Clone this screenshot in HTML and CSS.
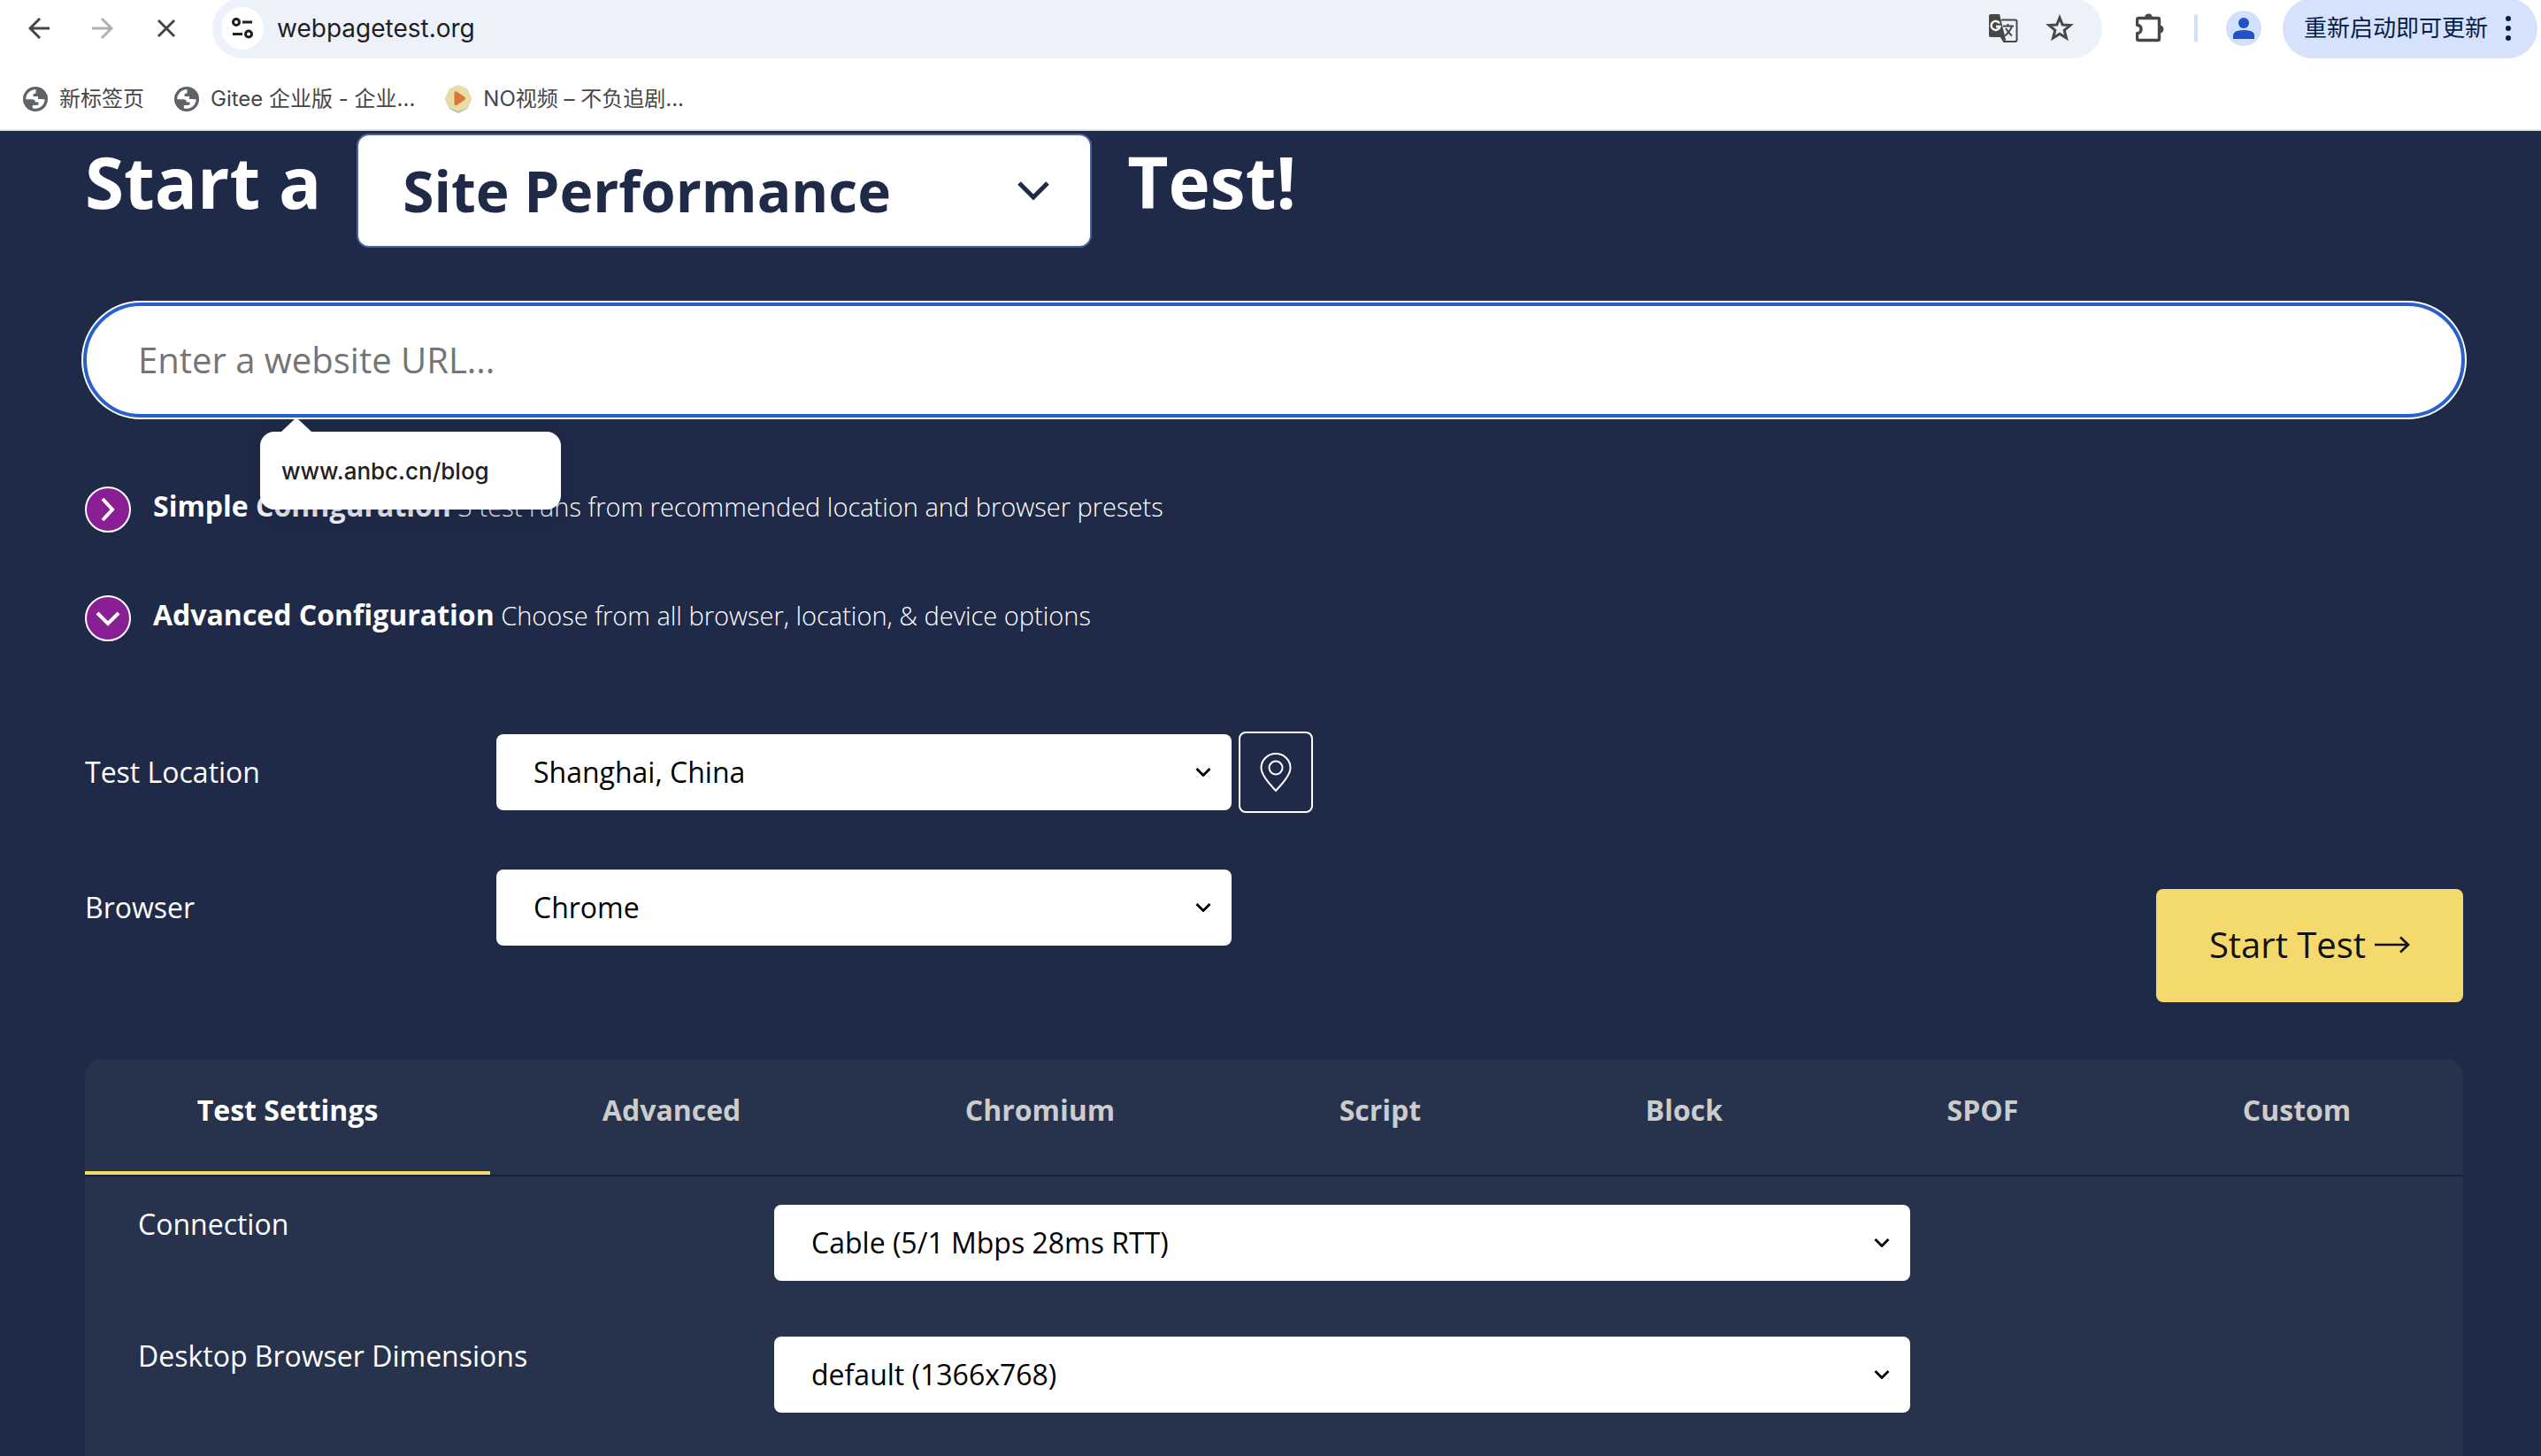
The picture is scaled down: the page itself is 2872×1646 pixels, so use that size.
FILE: index.html
```html
<!DOCTYPE html>
<html lang="en">
<head>
<meta charset="utf-8">
<title>WebPageTest</title>
<link rel="stylesheet" href="styles.css">
</head>
<body>
<svg class="sprite" aria-hidden="true">
  <symbol id="chevron" viewBox="0 0 18 10"><path d="M1.500 1L9 8.500L16.500 1" fill="none" stroke="currentColor" stroke-width="2.800"/></symbol>
  <symbol id="globe" viewBox="0 0 28 28">
    <circle cx="14" cy="14" r="14" fill="#5f6368"/>
    <path d="M14.500 3C8.200 3.200 3.400 8 3.200 14.200L10.500 14.200C12.600 14.200 14 15.600 14 17.500L17.500 17.500L17.500 20.500L14 21L10.800 21L10.800 24.200C12.500 24.900 14.500 25.100 16.500 24.500C20.500 23.500 24.300 20 24.800 14.500L20.500 14L17 14L17 11L12 11C10.500 9 12 7.500 14.500 7.500Z" fill="#fff"/>
  </symbol>
</svg>

<header class="browser">
  <div class="toolbar">
    <nav class="nav-buttons">
      <button class="icon-button" aria-label="Back"><svg width="24" height="24" viewBox="0 0 24 24"><path d="M24 12H2M13 1L2 12L13 23" fill="none" stroke="#474747" stroke-width="3"/></svg></button>
      <button class="icon-button" aria-label="Forward"><svg width="24" height="24" viewBox="0 0 24 24"><path d="M0 12H22M11 1L22 12L11 23" fill="none" stroke="#b0b0b0" stroke-width="3"/></svg></button>
      <button class="icon-button" aria-label="Stop loading"><svg width="24" height="24" viewBox="0 0 24 24"><path d="M3 3L21 21M21 3L3 21" fill="none" stroke="#474747" stroke-width="3"/></svg></button>
    </nav>
    <div class="omnibox">
      <button class="site-info" aria-label="Site information">
        <svg width="24" height="24" viewBox="0 0 24 24" fill="none" stroke="#1f1f1f" stroke-width="3"><circle cx="5" cy="5" r="3.500"/><path d="M12 5H23M1 18.500H12"/><circle cx="19" cy="18.500" r="3.500"/></svg>
      </button>
      <input class="address" type="text" aria-label="Address" value="webpagetest.org">
      <button class="icon-button" aria-label="Translate">
        <svg width="34" height="34" viewBox="0 0 34 34"><path d="M15 7.500H30.500Q32.500 7.500 32.500 9.500V30Q32.500 32 30.500 32H18L15 27" fill="none" stroke="#474747" stroke-width="2"/><path d="M3 1H13L20.500 32L14 27H3Q1 27 1 25V3Q1 1 3 1Z" fill="#474747"/><path d="M13 11.500A5 5 0 1 0 13.500 15H9" fill="none" stroke="#fff" stroke-width="2.400"/><path d="M17 14.500H29M22.500 12V14.500M27 14.500Q25 21 19 25.500M20 17Q23 22 27 25.500" fill="none" stroke="#474747" stroke-width="2"/></svg>
      </button>
      <button class="icon-button" aria-label="Bookmark this page">
        <svg width="32" height="32" viewBox="0 0 32 32"><path d="M16 4L19.200 12L28 12.600L21.200 18.200L23.500 27L16 22.200L8.500 27L10.800 18.200L4 12.600L12.800 12Z" fill="none" stroke="#474747" stroke-width="3"/></svg>
      </button>
    </div>
    <div class="toolbar-end">
      <button class="icon-button" aria-label="Extensions">
        <svg width="32" height="34" viewBox="0 0 32 34"><path d="M3.500 5.500H25Q26.500 5.500 26.500 7V29Q26.500 30.500 25 30.500H3.500Q1.500 30.500 1.500 29V23Q6 22 6 18Q6 14 1.500 13V7Q1.500 5.500 3.500 5.500Z" fill="none" stroke="#474747" stroke-width="3.400"/><path d="M10 5A4.500 4.500 0 0 1 19 5ZM27 13.500A4.500 4.500 0 0 1 27 22.500Z" fill="#474747"/></svg>
      </button>
      <span class="divider"></span>
      <button class="avatar" aria-label="Profile">
        <svg width="24" height="24" viewBox="0 0 24 24" fill="#2250c5"><circle cx="12" cy="6" r="6"/><path d="M0 24V20Q0 14 12 14Q24 14 24 20V24Z"/></svg>
      </button>
      <button class="update">重新启动即可更新
        <svg width="6" height="28" viewBox="0 0 6 28" fill="#041e49"><circle cx="3" cy="3" r="3"/><circle cx="3" cy="14" r="3"/><circle cx="3" cy="25" r="3"/></svg>
      </button>
    </div>
  </div>
  <nav class="bookmarks">
    <a class="bookmark" href="#"><svg width="28" height="28"><use href="#globe"/></svg>新标签页</a>
    <a class="bookmark" href="#"><svg width="28" height="28"><use href="#globe"/></svg>Gitee 企业版 - 企业...</a>
    <a class="bookmark" href="#"><svg width="30" height="32" viewBox="0 0 30 32"><path d="M15 2L25 6L30 16L25 27L15 32L5 27L0 16L5 6Z" fill="#bdb9a4"/><path d="M15 0L25 4L30 15L25 26L15 30L5 26L0 15L5 4Z" fill="#eadca6"/><path d="M10.500 9Q10.500 6.500 13 7.500L22 13.500Q24 15.500 22 17L13 23Q10.500 24 10.500 21.500Z" fill="#db7838"/></svg>NO视频 – 不负追剧...</a>
  </nav>
</header>

<main class="page">
  <h1 class="title">
    <label for="test-type">Start a</label>
    <span class="select select-title">
      <select id="test-type"><option>Site Performance</option></select>
      <svg width="36" height="22" viewBox="0 0 36 22"><path d="M2 2L18 18L34 2" fill="none" stroke="currentColor" stroke-width="5"/></svg>
    </span>
    <span>Test!</span>
  </h1>

  <div class="url-field">
    <input class="url" type="text" aria-label="Website URL" placeholder="Enter a website URL...">
    <div class="suggestions"><a href="#">www.anbc.cn/blog</a></div>
  </div>

  <div class="configs">
    <button class="config" aria-expanded="false">
      <span class="config-icon"><svg width="28" height="28" viewBox="0 0 28 28"><path d="M8 2L19 14L8 26" fill="none" stroke="#fff" stroke-width="4"/></svg></span>
      <span class="config-text"><strong>Simple Configuration</strong> 3 test runs from recommended location and browser presets</span>
    </button>
    <button class="config" aria-expanded="true">
      <span class="config-icon"><svg width="28" height="28" viewBox="0 0 28 28"><path d="M2 8L14 20L26 8" fill="none" stroke="#fff" stroke-width="4"/></svg></span>
      <span class="config-text"><strong>Advanced Configuration</strong> Choose from all browser, location, &amp; device options</span>
    </button>
  </div>

  <div class="start-row">
    <div class="fields">
      <div class="field">
        <label for="location">Test Location</label>
        <span class="select">
          <select id="location"><option>Shanghai, China</option></select>
          <svg width="18" height="10"><use href="#chevron"/></svg>
        </span>
        <button class="pin" aria-label="Choose location on map">
          <svg width="36" height="44" viewBox="0 0 36 44" fill="none" stroke="#fff" stroke-width="2"><path d="M18 43C14 38 1.500 27 1.500 17A16.500 16 0 0 1 34.500 17C34.500 27 22 38 18 43Z"/><circle cx="18" cy="17" r="7.500"/></svg>
        </button>
      </div>
      <div class="field">
        <label for="browser">Browser</label>
        <span class="select">
          <select id="browser"><option>Chrome</option></select>
          <svg width="18" height="10"><use href="#chevron"/></svg>
        </span>
      </div>
    </div>
    <button class="start">Start Test
      <svg width="40" height="20" viewBox="0 0 40 20"><path d="M0 10H38M29 1.500L38 10L29 18.500" fill="none" stroke="#111" stroke-width="2.600"/></svg>
    </button>
  </div>

  <section class="panel">
    <div class="tabs" role="tablist">
      <button class="tab tab-active" role="tab" aria-selected="true">Test Settings</button>
      <button class="tab" role="tab">Advanced</button>
      <button class="tab" role="tab">Chromium</button>
      <button class="tab" role="tab">Script</button>
      <button class="tab" role="tab">Block</button>
      <button class="tab" role="tab">SPOF</button>
      <button class="tab" role="tab">Custom</button>
    </div>
    <div class="settings">
      <div class="setting">
        <label for="connection">Connection</label>
        <span class="select">
          <select id="connection"><option>Cable (5/1 Mbps 28ms RTT)</option></select>
          <svg width="18" height="10"><use href="#chevron"/></svg>
        </span>
      </div>
      <div class="setting">
        <label for="dimensions">Desktop Browser Dimensions</label>
        <span class="select">
          <select id="dimensions"><option>default (1366x768)</option></select>
          <svg width="18" height="10"><use href="#chevron"/></svg>
        </span>
      </div>
    </div>
  </section>
</main>
</body>
</html>
```
FILE: styles.css
```css
* { box-sizing: border-box; }

body {
  margin: 0;
  min-height: 100vh;
  display: flex;
  flex-direction: column;
  background: #1f2a48;
  color: #fff;
  font: 32px/44px "Open Sans", "Noto Sans", sans-serif;
}

button, input, select { font: inherit; color: inherit; }
button { padding: 0; border: 0; background: none; cursor: pointer; }
a { color: inherit; text-decoration: none; }
svg { display: block; flex: none; }
.sprite { position: absolute; width: 0; height: 0; }

/* Browser chrome */
.browser {
  background: #fff;
  border-bottom: 2px solid #dfe3de;
  color: #474747;
  font: 24px/32px Inter, "Noto Sans CJK SC", sans-serif;
}
.toolbar {
  display: flex;
  height: 66px;
  padding-right: 4px;
  overflow: hidden;
  align-items: flex-end;
}
.nav-buttons {
  display: flex;
  gap: 48px;
  padding: 0 40px 0 32px;
  height: 68px;
  align-items: center;
}
.icon-button { display: flex; flex: none; }
.omnibox {
  flex: 1;
  display: flex;
  align-items: center;
  gap: 31px;
  height: 68px;
  padding: 0 32px 0 10px;
  border-radius: 34px;
  background: #edf2fa;
}
.site-info {
  display: grid;
  place-items: center;
  flex: none;
  width: 48px;
  height: 48px;
  border-radius: 50%;
  background: #fff;
}
.address {
  flex: 1;
  min-width: 0;
  margin-left: -16px;
  padding: 0;
  border: 0;
  outline: 0;
  background: none;
  color: #1f1f1f;
  font-size: 28px;
}
.toolbar-end {
  display: flex;
  align-items: center;
  height: 68px;
  padding-left: 38px;
}
.divider {
  width: 4px;
  height: 32px;
  margin: 0 32px 0 34px;
  border-radius: 2px;
  background: #d3e0fc;
}
.avatar {
  display: grid;
  place-items: center;
  width: 40px;
  height: 40px;
  margin-right: 24px;
  border-radius: 50%;
  background: #d3e0fc;
}
.update {
  display: flex;
  align-items: center;
  gap: 20px;
  height: 68px;
  padding: 0 30px 0 24px;
  border-radius: 34px;
  background: #d6e1fb;
  color: #041e49;
  font-size: 26px;
  white-space: nowrap;
}
.bookmarks {
  display: flex;
  align-items: center;
  gap: 34px;
  height: 80px;
  padding: 12px 26px 0;
}
.bookmark {
  display: flex;
  align-items: center;
  gap: 13px;
  white-space: nowrap;
}

/* Test form */
.page {
  flex: 1;
  display: flex;
  flex-direction: column;
  padding: 3px 88px 0 96px;
}
.title {
  display: flex;
  align-items: flex-start;
  gap: 40px;
  margin: 0 0 62px;
  font-size: 80px;
  line-height: 108px;
  font-weight: 700;
}
.select {
  position: relative;
  display: block;
  color: #000;
}
.select select {
  display: block;
  width: 100%;
  height: 86px;
  padding: 0 64px 0 42px;
  border: 0;
  border-radius: 8px;
  background: #fff;
  appearance: none;
}
.select svg {
  position: absolute;
  top: 50%;
  right: 23px;
  transform: translateY(-50%);
  pointer-events: none;
}
.select-title {
  flex: 0 1 831px;
  color: #1f2a48;
}
.select-title select {
  height: 129px;
  padding: 0 100px 0 50px;
  border: 2px solid #4d6298;
  border-radius: 14px;
  font-size: 64px;
}
.select-title svg { right: 48px; }

.url-field {
  position: relative;
  margin: 0 -2px;
}
.url {
  display: block;
  width: 100%;
  height: 130px;
  padding: 0 58px 2px;
  border: 4px solid #2860c8;
  border-radius: 65px;
  outline: 0;
  background: #fff;
  box-shadow: 0 0 0 2px #fff;
  color: #111;
  font-size: 40px;
}
.url::placeholder { color: #757575; opacity: 1; }
.suggestions {
  position: absolute;
  top: 146px;
  left: 200px;
  width: 340px;
  padding: 25px 24px 23px;
  border-radius: 16px;
  background: #fff;
  box-shadow: 0 6px 20px rgba(20, 28, 50, 0.3);
  color: #1f1f1f;
  font: 500 26px/40px Inter, sans-serif;
}
.suggestions::before {
  content: "";
  position: absolute;
  left: 24px;
  bottom: 100%;
  border: solid transparent;
  border-width: 0 17px 16px;
  border-bottom-color: #fff;
}

.configs {
  display: flex;
  flex-direction: column;
  gap: 71px;
  margin: 78px 0 102px;
}
.config {
  display: flex;
  align-items: flex-start;
  gap: 25px;
  text-align: left;
}
.config-icon {
  display: grid;
  place-items: center;
  flex: none;
  width: 52px;
  height: 52px;
  border: 2px solid #fff;
  border-radius: 50%;
  background: #8a1e94;
}
.config-text {
  font-size: 29px;
  font-weight: 300;
}
.config-text strong {
  font-size: 32px;
  font-weight: 700;
}

.start-row {
  display: flex;
  align-items: flex-end;
  justify-content: space-between;
  margin-bottom: 64px;
}
.fields {
  flex: 1;
  display: grid;
  gap: 64px;
  padding-bottom: 64px;
}
.field {
  display: grid;
  grid-template-columns: 465px minmax(0, 831px) 84px;
  align-items: center;
}
.pin {
  display: grid;
  place-items: center;
  width: 84px;
  height: 92px;
  margin-left: 8px;
  border: 2px solid #fff;
  border-radius: 8px;
}
.start {
  display: flex;
  align-items: center;
  justify-content: center;
  gap: 10px;
  width: 347px;
  height: 128px;
  padding-bottom: 2px;
  border-radius: 8px;
  background: #f4d96d;
  color: #111;
  font-size: 40px;
}

/* Settings panel */
.panel {
  flex: 1;
  border-radius: 20px 20px 0 0;
  background: #27334d;
}
.tabs {
  display: flex;
  border-bottom: 2px solid #18213b;
}
.tab {
  flex: 1 1 auto;
  padding: 36px 0 47px;
  border-bottom: 4px solid transparent;
  color: #ccc;
  font-weight: 700;
}
.tab-active {
  border-color: #f4d96d;
  color: #fff;
}
.settings {
  display: grid;
  gap: 63px;
  padding: 32px 60px 48px;
}
.setting {
  display: grid;
  grid-template-columns: 28% 50%;
  align-items: start;
}
```
